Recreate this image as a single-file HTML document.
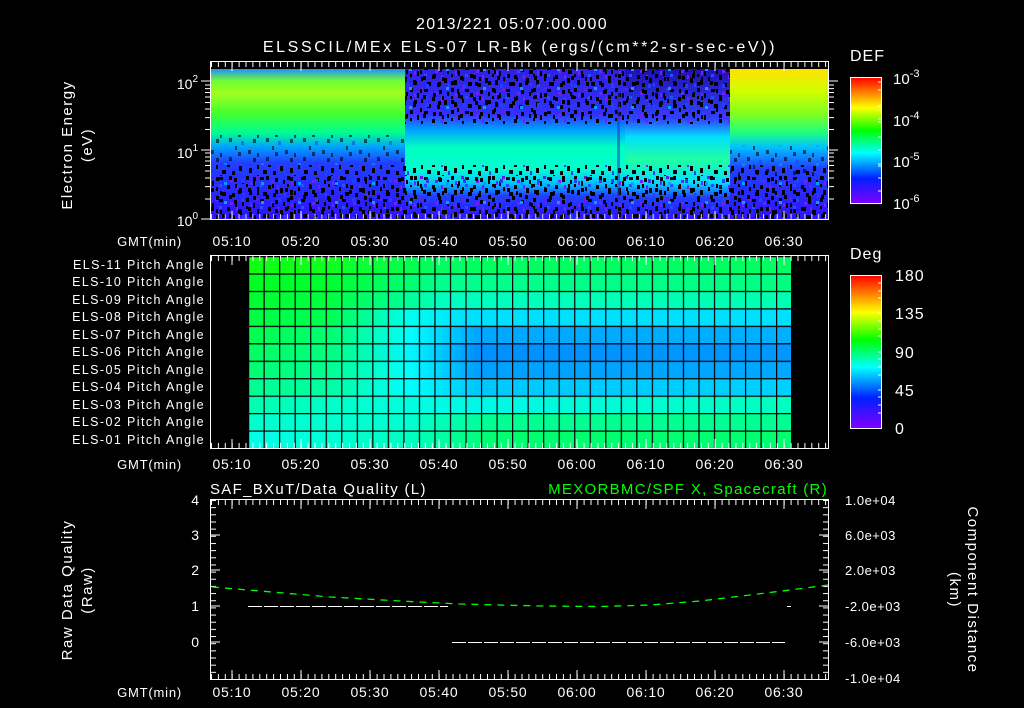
<!DOCTYPE html>
<html><head><meta charset="utf-8"><style>
html,body{margin:0;padding:0;background:#000;width:1024px;height:708px;overflow:hidden}
svg{display:block}
text{font-family:"Liberation Sans",sans-serif;fill:#fff}
</style></head><body>
<svg width="1024" height="708" viewBox="0 0 1024 708" xmlns="http://www.w3.org/2000/svg">
<defs>
<pattern id="tk" x="211" y="0" width="6.9" height="10" patternUnits="userSpaceOnUse"><rect x="0" y="0" width="1" height="10" fill="#fff"/></pattern>
<pattern id="spk" x="0" y="0" width="41" height="22" patternUnits="userSpaceOnUse">
<rect x="0" y="0" width="3" height="4" fill="#000"/><rect x="7" y="5" width="2" height="5" fill="#000"/><rect x="14" y="1" width="4" height="3" fill="#000"/><rect x="22" y="9" width="3" height="4" fill="#000"/><rect x="3" y="14" width="3" height="5" fill="#000"/><rect x="11" y="11" width="2" height="4" fill="#000"/><rect x="17" y="16" width="4" height="4" fill="#000"/><rect x="29" y="2" width="3" height="4" fill="#000"/><rect x="0" y="8" width="2" height="3" fill="#000"/><rect x="34" y="12" width="3" height="5" fill="#000"/><rect x="27" y="17" width="3" height="4" fill="#000"/><rect x="37" y="4" width="2" height="4" fill="#000"/>
<rect x="4" y="5" width="2" height="4" fill="#7020ff"/><rect x="25" y="4" width="3" height="3" fill="#7020ff"/><rect x="10" y="0" width="3" height="3" fill="#6020e0"/><rect x="31" y="9" width="2" height="4" fill="#7020ff"/><rect x="14" y="8" width="3" height="3" fill="#2050ff"/><rect x="38" y="17" width="2" height="4" fill="#2040ff"/>
</pattern>
<pattern id="spk2" x="7" y="5" width="37" height="19" patternUnits="userSpaceOnUse">
<rect x="0" y="0" width="3" height="4" fill="#000"/><rect x="6" y="8" width="2" height="4" fill="#000"/><rect x="12" y="3" width="3" height="4" fill="#2040ff"/><rect x="19" y="12" width="3" height="4" fill="#000"/><rect x="28" y="15" width="2" height="4" fill="#000"/><rect x="9" y="14" width="3" height="4" fill="#000"/><rect x="24" y="1" width="3" height="4" fill="#000"/><rect x="32" y="6" width="3" height="3" fill="#00a0ff"/>
</pattern>
<linearGradient id="gA" x1="0" y1="0" x2="0" y2="1"><stop offset="0" stop-color="#2090ff"/><stop offset="0.08" stop-color="#70ff30"/><stop offset="0.16" stop-color="#a0ff20"/><stop offset="0.3" stop-color="#40ff30"/><stop offset="0.42" stop-color="#00ff90"/><stop offset="0.52" stop-color="#00a0ff"/><stop offset="0.62" stop-color="#2040ff"/><stop offset="1" stop-color="#3010ff"/></linearGradient>
<linearGradient id="gB" x1="0" y1="0" x2="0" y2="1"><stop offset="0" stop-color="#3020e0"/><stop offset="0.3" stop-color="#3030ff"/><stop offset="0.4" stop-color="#00a0ff"/><stop offset="0.52" stop-color="#00ffc0"/><stop offset="0.66" stop-color="#00ffd0"/><stop offset="0.76" stop-color="#00c0ff"/><stop offset="0.84" stop-color="#2040ff"/><stop offset="1" stop-color="#3010ff"/></linearGradient>
<linearGradient id="gC" x1="0" y1="0" x2="0" y2="1"><stop offset="0" stop-color="#2010b0"/><stop offset="0.33" stop-color="#3040ff"/><stop offset="0.45" stop-color="#00e0ff"/><stop offset="0.6" stop-color="#20ffa0"/><stop offset="0.75" stop-color="#00e0ff"/><stop offset="0.85" stop-color="#2040ff"/><stop offset="1" stop-color="#3010ff"/></linearGradient>
<linearGradient id="gD" x1="0" y1="0" x2="0" y2="1"><stop offset="0" stop-color="#ffe000"/><stop offset="0.15" stop-color="#d0ff00"/><stop offset="0.3" stop-color="#80ff20"/><stop offset="0.42" stop-color="#20ff80"/><stop offset="0.52" stop-color="#00c0ff"/><stop offset="0.66" stop-color="#2040ff"/><stop offset="1" stop-color="#3010ff"/></linearGradient>
<linearGradient id="cb1" x1="0" y1="0" x2="0" y2="1"><stop offset="0" stop-color="#ff0000"/><stop offset="0.12" stop-color="#ff8000"/><stop offset="0.24" stop-color="#ffff00"/><stop offset="0.42" stop-color="#00ff00"/><stop offset="0.6" stop-color="#00ffff"/><stop offset="0.8" stop-color="#0020ff"/><stop offset="1" stop-color="#8000ff"/></linearGradient>
<linearGradient id="rg1"><stop offset="0" stop-color="#10ff10"/><stop offset="0.15" stop-color="#10ff20"/><stop offset="0.35" stop-color="#00ff60"/><stop offset="1" stop-color="#00ff60"/></linearGradient>
<linearGradient id="rg2"><stop offset="0" stop-color="#00ff20"/><stop offset="0.15" stop-color="#00ff30"/><stop offset="0.36" stop-color="#00ff90"/><stop offset="1" stop-color="#00ff80"/></linearGradient>
<linearGradient id="rg3"><stop offset="0" stop-color="#00ff30"/><stop offset="0.15" stop-color="#00ff40"/><stop offset="0.36" stop-color="#00ffc0"/><stop offset="1" stop-color="#00ffb0"/></linearGradient>
<linearGradient id="rg4"><stop offset="0" stop-color="#00ff40"/><stop offset="0.15" stop-color="#00ff50"/><stop offset="0.3" stop-color="#00fff0"/><stop offset="0.4" stop-color="#00e0ff"/><stop offset="1" stop-color="#00e0ff"/></linearGradient>
<linearGradient id="rg5"><stop offset="0" stop-color="#00ff50"/><stop offset="0.15" stop-color="#00ff70"/><stop offset="0.3" stop-color="#00ffff"/><stop offset="0.42" stop-color="#00a8ff"/><stop offset="1" stop-color="#00b0ff"/></linearGradient>
<linearGradient id="rg6"><stop offset="0" stop-color="#00ff60"/><stop offset="0.15" stop-color="#00ff80"/><stop offset="0.3" stop-color="#00f8ff"/><stop offset="0.42" stop-color="#0090ff"/><stop offset="1" stop-color="#0098ff"/></linearGradient>
<linearGradient id="rg7"><stop offset="0" stop-color="#00ff70"/><stop offset="0.15" stop-color="#00ff90"/><stop offset="0.3" stop-color="#00ffff"/><stop offset="0.42" stop-color="#00a0ff"/><stop offset="1" stop-color="#00a8ff"/></linearGradient>
<linearGradient id="rg8"><stop offset="0" stop-color="#00ff90"/><stop offset="0.15" stop-color="#00ffa0"/><stop offset="0.3" stop-color="#00ffff"/><stop offset="0.42" stop-color="#00c8ff"/><stop offset="1" stop-color="#00d0ff"/></linearGradient>
<linearGradient id="rg9"><stop offset="0" stop-color="#00ffb0"/><stop offset="0.3" stop-color="#00ffe0"/><stop offset="0.42" stop-color="#00f8e8"/><stop offset="1" stop-color="#00ffc0"/></linearGradient>
<linearGradient id="rg10"><stop offset="0" stop-color="#00ffd0"/><stop offset="0.3" stop-color="#00ffd0"/><stop offset="0.45" stop-color="#00ff90"/><stop offset="1" stop-color="#00ff90"/></linearGradient>
<linearGradient id="rg11"><stop offset="0" stop-color="#00ffe8"/><stop offset="0.3" stop-color="#00ffc0"/><stop offset="0.45" stop-color="#00ff70"/><stop offset="1" stop-color="#00ff70"/></linearGradient>
<pattern id="grid" x="248" y="256" width="15.53" height="17.45" patternUnits="userSpaceOnUse"><rect x="0" y="0" width="1.2" height="17.45" fill="#000"/><rect x="0" y="0" width="15.53" height="1.2" fill="#000"/></pattern>
<pattern id="yt3" x="0" y="500" width="10" height="7.16" patternUnits="userSpaceOnUse"><rect x="0" y="0" width="10" height="1" fill="#fff"/></pattern>
</defs>

<!-- titles -->
<text x="512" y="29" font-size="16" text-anchor="middle" letter-spacing="1.3">2013/221 05:07:00.000</text>
<text x="520" y="52" font-size="16" text-anchor="middle" letter-spacing="2.6">ELSSCIL/MEx ELS-07 LR-Bk  (ergs/(cm**2-sr-sec-eV))</text>

<!-- PANEL 1 -->
<rect x="211" y="69" width="194" height="151" fill="url(#gA)"/>
<rect x="405" y="69" width="220" height="151" fill="url(#gB)"/>
<rect x="625" y="69" width="105" height="151" fill="url(#gC)"/>
<rect x="730" y="69" width="98" height="151" fill="url(#gD)"/>
<rect x="405" y="69" width="325" height="55" fill="url(#spk)"/>
<rect x="405" y="69" width="325" height="50" fill="url(#spk2)"/>
<rect x="211" y="165" width="617" height="55" fill="url(#spk)"/>
<rect x="211" y="175" width="617" height="45" fill="url(#spk2)"/>
<rect x="211" y="135" width="194" height="30" fill="url(#spk2)" opacity="0.6"/>
<rect x="730" y="145" width="98" height="30" fill="url(#spk2)" opacity="0.6"/>
<rect x="617" y="90" width="3" height="110" fill="#2030c0" opacity="0.5"/>
<rect x="211" y="62" width="617" height="7" fill="#000"/>
<rect x="211" y="62" width="617" height="5" fill="url(#tk)"/>
<rect x="211" y="214" width="617" height="6" fill="url(#tk)" opacity="0.8"/>
<g stroke="#fff" stroke-width="1">
<rect x="210.5" y="61.5" width="618" height="158" fill="none"/>
<path d="M232 62v9M301 62v9M370 62v9M439 62v9M508 62v9M577 62v9M646 62v9M715 62v9M784 62v9"/>
<path d="M232 220v-9M301 220v-9M370 220v-9M439 220v-9M508 220v-9M577 220v-9M646 220v-9M715 220v-9M784 220v-9"/>
<path d="M201 81h9M201 150h9M201 219h9M205 85h5M205 88.6h5M205 92.5h5M205 97h5M205 102.5h5M205 109h5M205 117.6h5M205 129.5h5M205 153h5M205 157h5M205 161h5M205 165.5h5M205 171h5M205 178h5M205 186.6h5M205 199h5"/>
<path d="M829 81h9M829 150h9M829 85h5M829 88.6h5M829 92.5h5M829 97h5M829 102.5h5M829 109h5M829 117.6h5M829 129.5h5M829 153h5M829 157h5M829 161h5M829 165.5h5M829 171h5M829 178h5M829 186.6h5M829 199h5"/>
</g>
<text x="198" y="89" font-size="14" text-anchor="end">10<tspan dy="-7" font-size="10">2</tspan></text>
<text x="198" y="158" font-size="14" text-anchor="end">10<tspan dy="-7" font-size="10">1</tspan></text>
<text x="198" y="226" font-size="14" text-anchor="end">10<tspan dy="-7" font-size="10">0</tspan></text>
<text transform="translate(72,145) rotate(-90)" font-size="15" text-anchor="middle" letter-spacing="1.5">Electron Energy</text>
<text transform="translate(92,145) rotate(-90)" font-size="15" text-anchor="middle" letter-spacing="1.5">(eV)</text>
<g font-size="14" text-anchor="middle" letter-spacing="0.8">
<text x="182" y="246" font-size="13" text-anchor="end">GMT(min)</text>
<text x="232" y="246">05:10</text><text x="301" y="246">05:20</text><text x="370" y="246">05:30</text><text x="439" y="246">05:40</text><text x="508" y="246">05:50</text><text x="577" y="246">06:00</text><text x="646" y="246">06:10</text><text x="715" y="246">06:20</text><text x="784" y="246">06:30</text>
</g>
<!-- colorbar 1 -->
<text x="850" y="61" font-size="16" letter-spacing="1">DEF</text>
<rect x="850.5" y="77.5" width="31" height="126" fill="url(#cb1)" stroke="#fff"/>
<g stroke="#fff"><path d="M882 82h-4M882 90h-4M882 106h-4M882 119h-4M882 122h-4M882 137h-4M882 150h-4M882 164h-4M882 166h-4M882 178h-4M882 191h-4"/></g>
<g font-size="15"><text x="893" y="84">10<tspan dy="-7" font-size="11">-3</tspan></text><text x="893" y="126">10<tspan dy="-7" font-size="11">-4</tspan></text><text x="893" y="167">10<tspan dy="-7" font-size="11">-5</tspan></text><text x="893" y="209">10<tspan dy="-7" font-size="11">-6</tspan></text></g>

<!-- PANEL 2 -->
<rect x="248" y="256" width="543" height="17.45" fill="url(#rg1)"/>
<rect x="248" y="273.45" width="543" height="17.45" fill="url(#rg2)"/>
<rect x="248" y="290.9" width="543" height="17.45" fill="url(#rg3)"/>
<rect x="248" y="308.35" width="543" height="17.45" fill="url(#rg4)"/>
<rect x="248" y="325.8" width="543" height="17.45" fill="url(#rg5)"/>
<rect x="248" y="343.25" width="543" height="17.45" fill="url(#rg6)"/>
<rect x="248" y="360.7" width="543" height="17.45" fill="url(#rg7)"/>
<rect x="248" y="378.15" width="543" height="17.45" fill="url(#rg8)"/>
<rect x="248" y="395.6" width="543" height="17.45" fill="url(#rg9)"/>
<rect x="248" y="413.05" width="543" height="17.45" fill="url(#rg10)"/>
<rect x="248" y="430.5" width="543" height="18" fill="url(#rg11)"/>
<rect x="248" y="256" width="544" height="193" fill="url(#grid)"/>
<rect x="211" y="256" width="617" height="5" fill="url(#tk)"/>
<rect x="211" y="443" width="617" height="5" fill="url(#tk)"/>
<g stroke="#fff" fill="none">
<rect x="210.5" y="255.5" width="618" height="193"/>
<path d="M232 256v9M301 256v9M370 256v9M439 256v9M508 256v9M577 256v9M646 256v9M715 256v9M784 256v9"/>
<path d="M232 448v-9M301 448v-9M370 448v-9M439 448v-9M508 448v-9M577 448v-9M646 448v-9M715 448v-9M784 448v-9"/>
</g>
<g font-size="12.5" text-anchor="end" letter-spacing="1.4">
<text x="205" y="269">ELS-11 Pitch Angle</text><text x="205" y="286">ELS-10 Pitch Angle</text><text x="205" y="304">ELS-09 Pitch Angle</text><text x="205" y="321">ELS-08 Pitch Angle</text><text x="205" y="339">ELS-07 Pitch Angle</text><text x="205" y="356">ELS-06 Pitch Angle</text><text x="205" y="374">ELS-05 Pitch Angle</text><text x="205" y="391">ELS-04 Pitch Angle</text><text x="205" y="409">ELS-03 Pitch Angle</text><text x="205" y="426">ELS-02 Pitch Angle</text><text x="205" y="444">ELS-01 Pitch Angle</text>
</g>
<g font-size="14" text-anchor="middle" letter-spacing="0.8">
<text x="182" y="469" font-size="13" text-anchor="end">GMT(min)</text>
<text x="232" y="469">05:10</text><text x="301" y="469">05:20</text><text x="370" y="469">05:30</text><text x="439" y="469">05:40</text><text x="508" y="469">05:50</text><text x="577" y="469">06:00</text><text x="646" y="469">06:10</text><text x="715" y="469">06:20</text><text x="784" y="469">06:30</text>
</g>
<text x="850" y="259" font-size="16" letter-spacing="1">Deg</text>
<rect x="850.5" y="275.5" width="31" height="153" fill="url(#cb1)" stroke="#fff"/>
<g stroke="#fff"><path d="M882 283h-4M882 291h-4M882 298h-4M882 313h-4M882 321h-4M882 329h-4M882 336h-4M882 352h-4M882 359h-4M882 367h-4M882 375h-4M882 390h-4M882 397h-4M882 405h-4M882 413h-4"/></g>
<g font-size="16" letter-spacing="1"><text x="895" y="281">180</text><text x="895" y="319">135</text><text x="895" y="358">90</text><text x="895" y="396">45</text><text x="895" y="434">0</text></g>

<!-- PANEL 3 -->
<text x="210" y="494" font-size="15" letter-spacing="1.3">SAF_BXuT/Data Quality (L)</text>
<text x="828" y="494" font-size="15" text-anchor="end" letter-spacing="1.3" style="fill:#00ff00">MEXORBMC/SPF X, Spacecraft (R)</text>
<rect x="211" y="500" width="617" height="5" fill="url(#tk)"/>
<rect x="211" y="674" width="617" height="5" fill="url(#tk)"/>
<rect x="211" y="500" width="5" height="179" fill="url(#yt3)"/>
<rect x="823" y="500" width="5" height="179" fill="url(#yt3)"/>
<g stroke="#fff" fill="none">
<rect x="210.5" y="499.5" width="618" height="180"/>
<path d="M232 500v9M301 500v9M370 500v9M439 500v9M508 500v9M577 500v9M646 500v9M715 500v9M784 500v9"/>
<path d="M232 679v-9M301 679v-9M370 679v-9M439 679v-9M508 679v-9M577 679v-9M646 679v-9M715 679v-9M784 679v-9"/>
<path d="M211 535h9M211 570h9M211 606h9M211 642h9M828 535h-9M828 570h-9M828 606h-9M828 642h-9"/>
<path d="M248 606.5h200M452 642.5h333M787 606.5h4" stroke-dasharray="14 2"/>
</g>
<path d="M212 587 L260 591 L330 597 L400 601 L460 604 L540 606 L600 606.5 L650 605 L700 601 L750 595 L790 590 L828 585" stroke="#00ff00" stroke-width="1.3" fill="none" stroke-dasharray="7 6"/>
<g font-size="14" text-anchor="end"><text x="199" y="505">4</text><text x="199" y="540">3</text><text x="199" y="575">2</text><text x="199" y="611">1</text><text x="199" y="647">0</text></g>
<g font-size="13" letter-spacing="0.5"><text x="845" y="505">1.0e+04</text><text x="845" y="540">6.0e+03</text><text x="845" y="575">2.0e+03</text><text x="845" y="611">-2.0e+03</text><text x="845" y="647">-6.0e+03</text><text x="845" y="683">-1.0e+04</text></g>
<text transform="translate(72,590) rotate(-90)" font-size="15" text-anchor="middle" letter-spacing="1.5">Raw Data Quality</text>
<text transform="translate(92,590) rotate(-90)" font-size="15" text-anchor="middle" letter-spacing="1.5">(Raw)</text>
<text transform="translate(968,590) rotate(90)" font-size="15" text-anchor="middle" letter-spacing="1.5">Component Distance</text>
<text transform="translate(950,590) rotate(90)" font-size="15" text-anchor="middle" letter-spacing="1.5">(km)</text>
<g font-size="14" text-anchor="middle" letter-spacing="0.8">
<text x="182" y="697" font-size="13" text-anchor="end">GMT(min)</text>
<text x="232" y="697">05:10</text><text x="301" y="697">05:20</text><text x="370" y="697">05:30</text><text x="439" y="697">05:40</text><text x="508" y="697">05:50</text><text x="577" y="697">06:00</text><text x="646" y="697">06:10</text><text x="715" y="697">06:20</text><text x="784" y="697">06:30</text>
</g>
</svg>
</body></html>
